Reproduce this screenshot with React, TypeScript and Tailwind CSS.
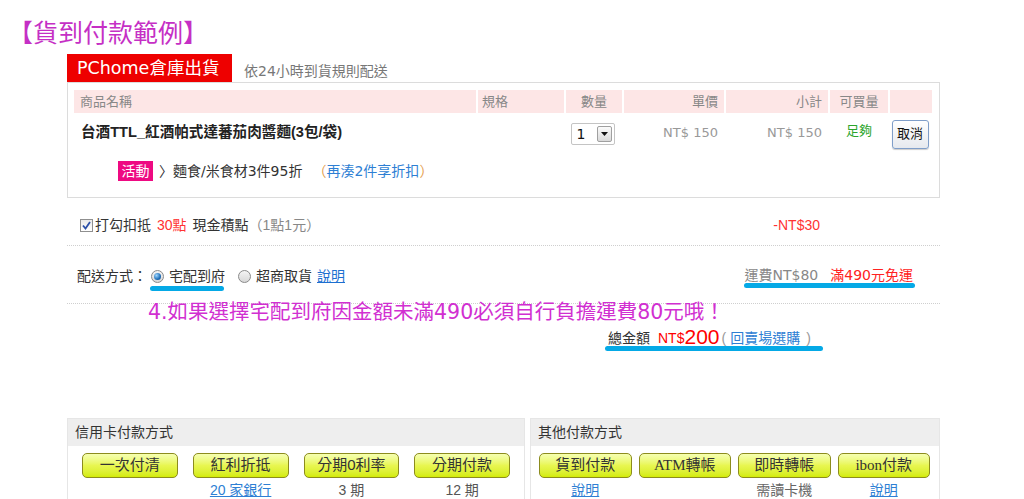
import React from "react";

const SANS = "font-['Liberation_Sans','Noto_Sans_CJK_TC',sans-serif]";
const VERD = "font-['DejaVu_Sans','Noto_Sans_CJK_TC',sans-serif]";
const SERIF = "font-['Liberation_Serif','Noto_Sans_CJK_TC',serif]";

function Radio({ checked }: { checked?: boolean }) {
  return (
    <span className="inline-flex h-[13px] w-[13px] items-center justify-center rounded-full border border-[#8a8a8a] bg-gradient-to-b from-[#f4f4f4] to-[#d8d8d8]">
      {checked && (
        <span className="h-[7px] w-[7px] rounded-full bg-[radial-gradient(circle_at_35%_35%,#9fd6ff,#1f6fb8_60%,#0b3f7a)]" />
      )}
    </span>
  );
}

function Checkbox() {
  return (
    <span className="inline-flex h-[13px] w-[13px] items-center justify-center border border-[#8f8f8f] bg-gradient-to-b from-[#e9e9e9] to-[#ffffff]">
      <svg width="11" height="11" viewBox="0 0 11 11">
        <path d="M2 5.5 L4.5 8.5 L9 2" fill="none" stroke="#2a4fa8" strokeWidth="1.8" />
      </svg>
    </span>
  );
}

function YBtn({ label, serif }: { label: string; serif?: boolean }) {
  return (
    <div
      className={`flex h-[25px] items-center justify-center rounded-[5px] border border-[#8c8c1e] bg-gradient-to-b from-[#f6ffb0] via-[#e8f650] to-[#d4ec00] text-[15px] text-[#333] ${
        serif ? SERIF : SANS
      }`}
    >
      {label}
    </div>
  );
}

export default function App() {
  return (
    <div className={`relative h-[499px] w-[1024px] overflow-hidden bg-white ${SANS}`}>
      {/* Title */}
      <div className="h-[54px] pl-[8px] pt-[18px] text-[25px] leading-[30px] text-[#c52fc5]">
        【貨到付款範例】
      </div>

      <div className="ml-[67px] w-[873px]">
        {/* Tab row */}
        <div className="flex h-[28px] items-stretch">
          <div className={`flex w-[165px] items-center bg-[#ee0000] pl-[10px] text-[17.5px] text-white ${VERD}`}>
            PChome倉庫出貨
          </div>
          <div className={`flex items-center pl-[12px] pt-[6px] text-[14px] text-[#777] ${VERD}`}>
            依24小時到貨規則配送
          </div>
        </div>

        {/* Cart box */}
        <div className="h-[116px] border border-[#dcdcdc] pl-[6px] pr-[7px] pt-[7px]">
          <div className="flex h-[23px] gap-[2px] text-[13px] leading-[23px] text-[#888]">
            <div className="w-[402px] bg-[#fde6e6] pl-[6px]">商品名稱</div>
            <div className="w-[86px] bg-[#fde6e6] pl-[4px]">規格</div>
            <div className="w-[56px] bg-[#fde6e6] text-center">數量</div>
            <div className="w-[100px] bg-[#fde6e6] pr-[6px] text-right">單價</div>
            <div className="w-[102px] bg-[#fde6e6] pr-[6px] text-right">小計</div>
            <div className="w-[58px] bg-[#fde6e6] text-center">可買量</div>
            <div className="flex-1 bg-[#fde6e6]" />
          </div>

          <div className="flex h-[40px] items-center gap-[2px]">
            <div className="w-[402px] pl-[7px] text-[14.6px] font-bold text-[#222]">
              台酒TTL_紅酒帕式達蕃茄肉醬麵(3包/袋)
            </div>
            <div className="w-[86px]" />
            <div className="flex w-[56px] items-center justify-center pr-[3px] pt-[2px]">
              <div className="flex h-[22px] w-[44px] items-center justify-between rounded-[2px] border border-[#c4c4c4] bg-white pl-[5px] pr-[2px]">
                <span className={`text-[14px] text-[#111] ${VERD}`}>1</span>
                <span className="flex h-[16px] w-[15px] items-center justify-center rounded-[2px] border border-[#a0a0a0] bg-gradient-to-b from-[#fbfbfb] to-[#d9d9d9]">
                  <svg width="7" height="4" viewBox="0 0 7 4">
                    <path d="M0 0 H7 L3.5 4 Z" fill="#111" />
                  </svg>
                </span>
              </div>
            </div>
            <div className={`w-[100px] pr-[6px] text-right text-[13px] text-[#999] ${VERD}`}>NT$ 150</div>
            <div className={`w-[102px] pr-[6px] text-right text-[13px] text-[#999] ${VERD}`}>NT$ 150</div>
            <div className="w-[58px] pb-[4px] text-center text-[13px] text-[#2ca52c]">足夠</div>
            <div className="flex flex-1 items-center justify-center pr-[2px] pt-[2px]">
              <div className="flex h-[29px] w-[37px] items-center justify-center rounded-[3px] border border-[#7f9ec9] bg-gradient-to-b from-white to-[#e6e9ee] text-[13px] text-[#111] shadow-[0_1px_1px_rgba(0,0,0,0.2)]">
                取消
              </div>
            </div>
          </div>

          <div className="mt-[8px] flex h-[20px] items-center pl-[44px] text-[14px]">
            <span className="flex h-[20px] w-[35px] items-center justify-center bg-[#ee0a82] text-[14px] text-white">活動</span>
            <span className={`ml-[6px] text-[#333] ${VERD}`}>〉麵食/米食材3件95折</span>
            <span className={`ml-[10px] text-[#e5a050] ${VERD}`}>（</span>
            <span className={`text-[#2e7fd4] ${VERD}`}>再湊2件享折扣</span>
            <span className={`text-[#e5a050] ${VERD}`}>）</span>
          </div>
        </div>

        {/* Points row */}
        <div className="flex h-[48px] items-center border-b border-dotted border-[#cfcfcf] pl-[13px] pt-[8px] text-[14px]">
          <Checkbox />
          <span className="ml-[2px] text-[#333]">打勾扣抵</span>
          <span className="ml-[6px] text-[#f33]">30點</span>
          <span className="ml-[6px] text-[#333]">現金積點</span>
          <span className="text-[#888]">（1點1元）</span>
          <span className="ml-auto mr-[120px] text-[#f33]">-NT$30</span>
        </div>

        {/* Shipping row */}
        <div className="flex h-[58px] items-center border-b border-dotted border-[#cfcfcf] pl-[10px] pr-[27px] pt-[3px] text-[14px]">
          <span className="text-[#333]">配送方式：</span>
          <span className="relative ml-[4px] flex items-center">
            <Radio checked />
            <span className="ml-[5px] text-[#333]">宅配到府</span>
            <span className="absolute left-[-1px] top-[20px] h-[5px] w-[74px] rounded-full bg-[#05a9e6]" />
          </span>
          <span className="ml-[13px] flex items-center">
            <Radio />
            <span className="ml-[5px] text-[#333]">超商取貨</span>
          </span>
          <span className="ml-[5px] text-[#1c6fd0] underline">說明</span>
          <span className="relative ml-auto flex items-center pb-[2px]">
            <span className={`text-[#888] ${VERD}`}>運費NT$80</span>
            <span className={`ml-[12px] text-[#f22] ${VERD}`}>滿490元免運</span>
            <span className="absolute left-[-1px] top-[18px] h-[5px] w-[171px] rounded-full bg-[#05a9e6]" />
          </span>
        </div>

        {/* Note */}
        <div className={`h-[20px] pl-[81px] text-[20.5px] leading-[16px] text-[#d12fd1] ${VERD} whitespace-nowrap`}>
          4.如果選擇宅配到府因金額未滿490必須自行負擔運費80元哦！
        </div>

        {/* Total */}
        <div className="mt-[4px] flex h-[20px] items-end pl-[541px] leading-[20px]">
          <span className="relative flex items-end">
            <span className="text-[14px] text-[#333]">總金額</span>
            <span className="ml-[8px] text-[14px] text-[#f00]">NT$</span>
            <span className="text-[21px] leading-[22px] text-[#f00]">200</span>
            <span className="ml-[2px] text-[14px] text-[#999]">(</span>
            <span className="ml-[4px] text-[14px] text-[#2e7fd4]">回賣場選購</span>
            <span className="ml-[6px] text-[14px] text-[#999]">)</span>
            <span className="absolute left-[-3px] top-[20px] h-[5px] w-[218px] rounded-full bg-[#05a9e6]" />
          </span>
        </div>

        {/* Payment panels */}
        <div className="mt-[70px] flex gap-[5px]">
          <div className="h-[90px] w-[458px] border border-[#e6e6e6]">
            <div className="flex h-[27px] items-center bg-[#eeeeee] pl-[7px] text-[14px] text-[#333]">信用卡付款方式</div>
            <div className="mt-[7px] grid grid-cols-4 gap-x-[15px] pl-[14px] pr-[14px]">
              <YBtn label="一次付清" />
              <YBtn label="紅利折抵" />
              <YBtn label="分期0利率" />
              <YBtn label="分期付款" />
              <div />
              <div className="mt-[2px] text-center text-[14px] text-[#2e7fd4] underline">20 家銀行</div>
              <div className="mt-[2px] text-center text-[14px] text-[#555]">3 期</div>
              <div className="mt-[2px] text-center text-[14px] text-[#555]">12 期</div>
            </div>
          </div>
          <div className="h-[90px] flex-1 border border-[#e6e6e6]">
            <div className="flex h-[27px] items-center bg-[#eeeeee] pl-[7px] text-[14px] text-[#333]">其他付款方式</div>
            <div className="mt-[7px] grid grid-cols-4 gap-x-[7px] pl-[8px] pr-[9px]">
              <YBtn label="貨到付款" />
              <YBtn label="ATM轉帳" serif />
              <YBtn label="即時轉帳" />
              <YBtn label="ibon付款" serif />
              <div className="mt-[2px] text-center text-[14px] text-[#2e7fd4] underline">說明</div>
              <div />
              <div className="mt-[2px] text-center text-[14px] text-[#666]">需讀卡機</div>
              <div className="mt-[2px] text-center text-[14px] text-[#2e7fd4] underline">說明</div>
            </div>
          </div>
        </div>
      </div>
    </div>
  );
}
